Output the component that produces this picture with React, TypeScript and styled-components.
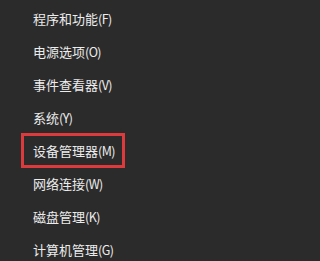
import React from 'react';
import styled, { createGlobalStyle } from 'styled-components';

const GlobalStyle = createGlobalStyle`
  html, body {
    margin: 0;
    padding: 0;
    background: #2b2b2b;
  }
`

const Menu = styled.ul`
  list-style: none;
  margin: 0;
  padding: 2px 0 0 0;
  width: 224px;
  height: 261px;
  box-sizing: border-box;
  background: #2b2b2b;
  overflow: hidden;
  font-family: "Noto Sans CJK SC", "Noto Sans", sans-serif;
  font-size: 13px;
  color: #ececec;
`

const Item = styled.li`
  height: 33px;
  display: flex;
  align-items: center;
  padding-left: 21px;
`

const Label = styled.span<{ $marked?: boolean }>`
  display: flex;
  align-items: center;
  box-sizing: border-box;
  height: 35px;
  width: 104px;
  padding-left: 9px;
  border: 3px solid ${p => (p.$marked ? '#dd3a3e' : 'transparent')};
  white-space: nowrap;
`

const Key = styled.span`
  font-size: 12.5px;
  letter-spacing: -0.6px;
`

const items = [
    { name: '程序和功能', key: 'F' },
    { name: '电源选项', key: 'O' },
    { name: '事件查看器', key: 'V' },
    { name: '系统', key: 'Y' },
    { name: '设备管理器', key: 'M' },
    { name: '网络连接', key: 'W' },
    { name: '磁盘管理', key: 'K' },
    { name: '计算机管理', key: 'G' },
]

export default function App() {
    return (
        <>
            <GlobalStyle />
            <Menu>
                {items.map((item) => (
                    <Item key={item.key}>
                        <Label $marked={item.key === 'M'}>
                            {item.name}
                            <Key>({item.key})</Key>
                        </Label>
                    </Item>
                ))}
            </Menu>
        </>
    )
}
